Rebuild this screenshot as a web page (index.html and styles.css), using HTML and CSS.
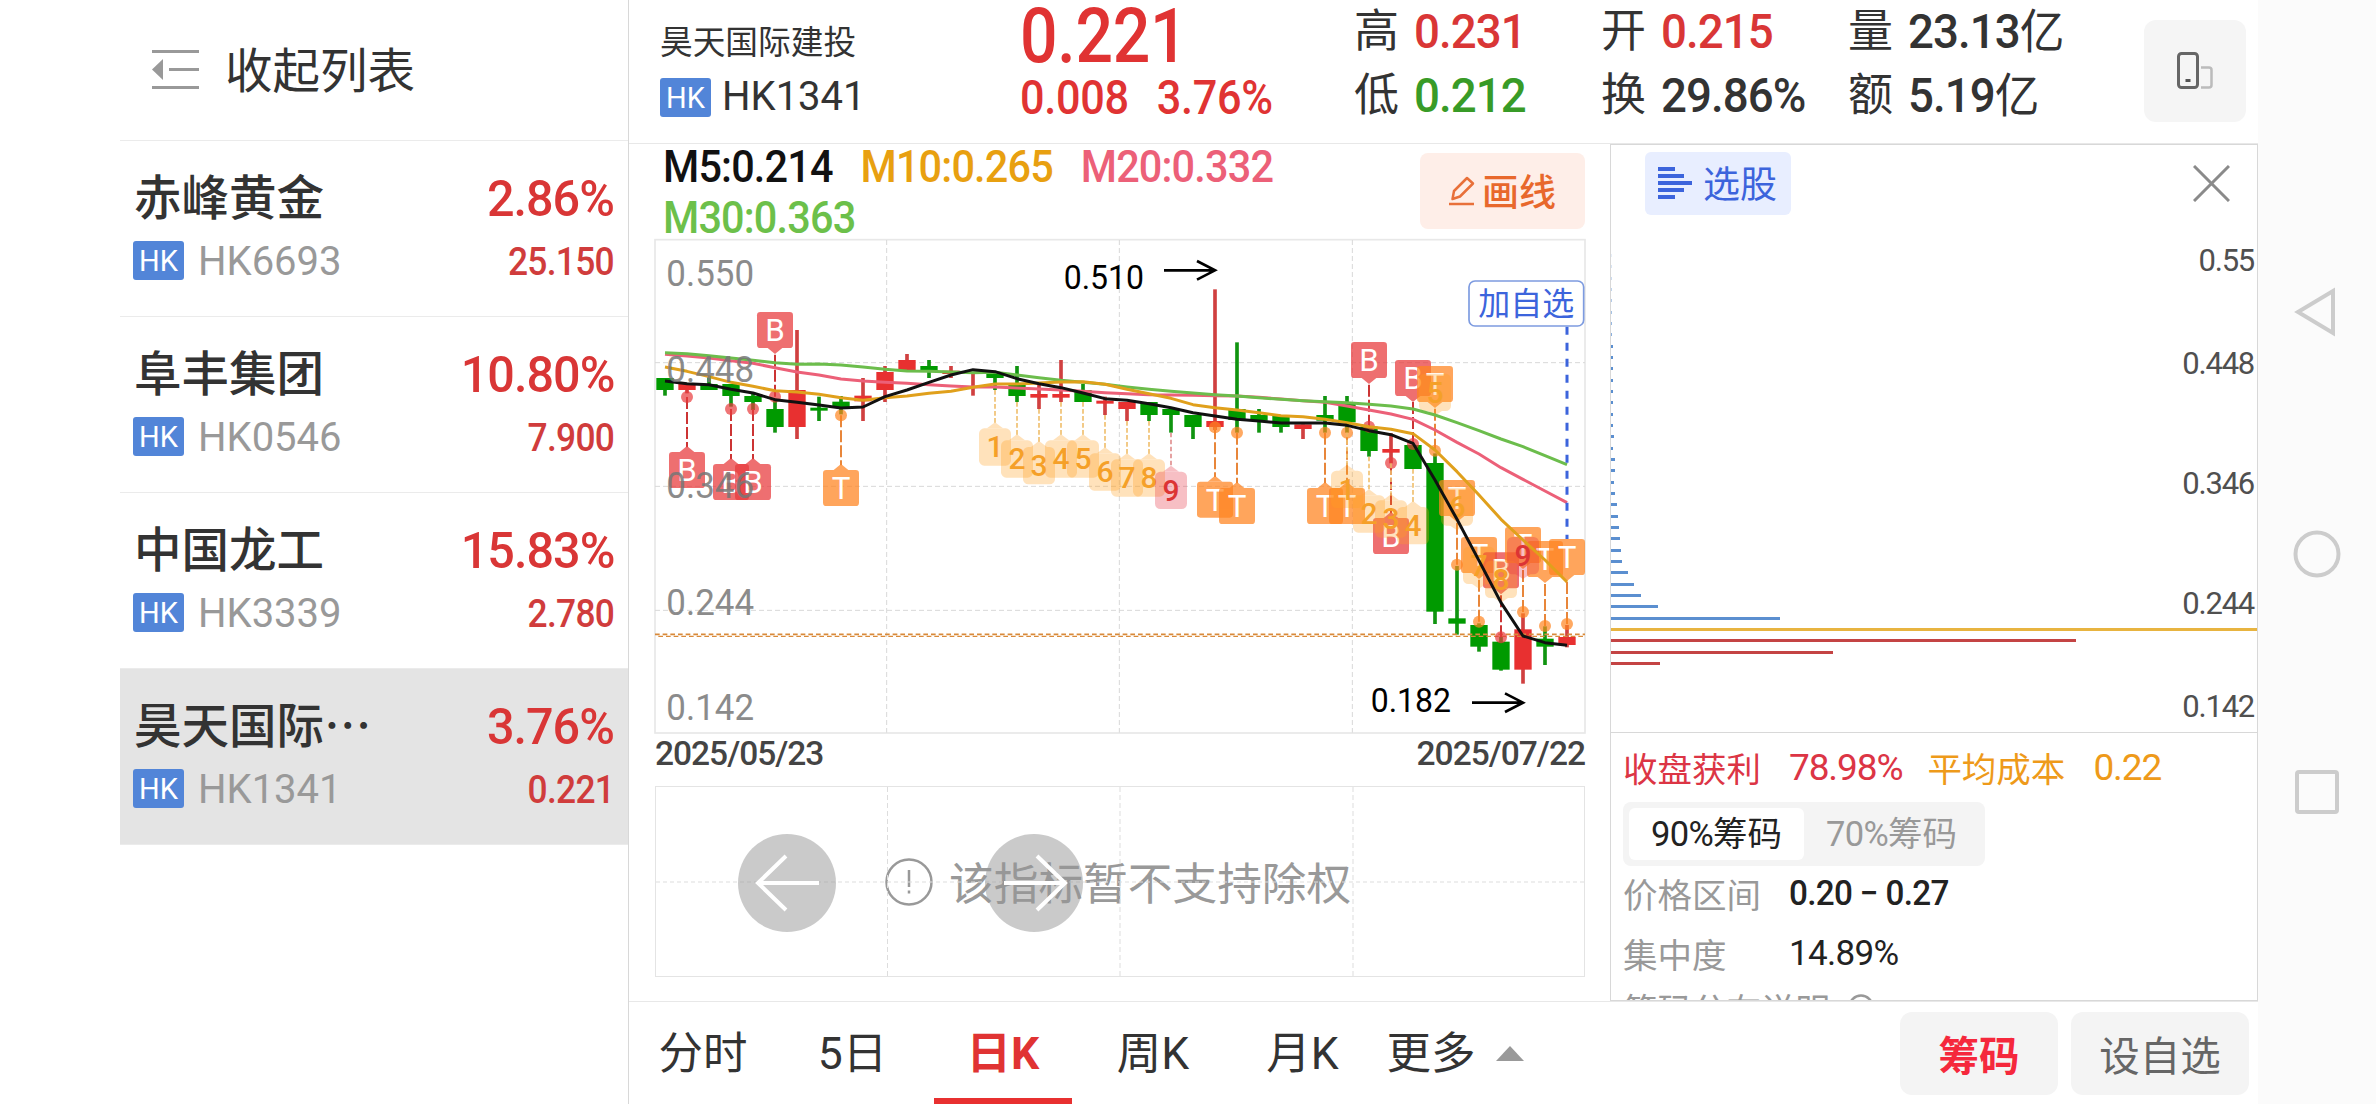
FILE: index.html
```html
<!DOCTYPE html>
<html lang="zh-CN">

<head>
    <meta charset="UTF-8">
    <meta name="viewport" content="width=device-width, initial-scale=1.0">
    <title>昊天国际建投 HK1341</title>
    <link rel="stylesheet" href="styles.css">
</head>

<body>
    <div class="app">
        <div class="sidebar">
            <div class="collapse">
                <svg width="48" height="40" viewBox="0 0 48 40">
                    <path d="M0 1.5h47M17 19.5h30M0 37.5h47" stroke="#999" stroke-width="3" />
                    <path d="M0 19.5L11 9v21z" fill="#999" />
                </svg>
                <span>收起列表</span>
            </div>
            <div class="stock">
                <div class="line">
                    <span class="name">赤峰黄金</span>
                    <span class="rate num">2.86%</span>
                </div>
                <div class="line sub">
                    <i class="tag">HK</i><span class="code">HK6693</span>
                    <span class="price num">25.150</span>
                </div>
            </div>
            <div class="stock">
                <div class="line">
                    <span class="name">阜丰集团</span>
                    <span class="rate num">10.80%</span>
                </div>
                <div class="line sub">
                    <i class="tag">HK</i><span class="code">HK0546</span>
                    <span class="price num">7.900</span>
                </div>
            </div>
            <div class="stock">
                <div class="line">
                    <span class="name">中国龙工</span>
                    <span class="rate num">15.83%</span>
                </div>
                <div class="line sub">
                    <i class="tag">HK</i><span class="code">HK3339</span>
                    <span class="price num">2.780</span>
                </div>
            </div>
            <div class="stock active">
                <div class="line">
                    <span class="name">昊天国际⋯</span>
                    <span class="rate num">3.76%</span>
                </div>
                <div class="line sub">
                    <i class="tag">HK</i><span class="code">HK1341</span>
                    <span class="price num">0.221</span>
                </div>
            </div>
        </div>

        <div class="main">
            <div class="quote">
                <div class="title">
                    <div class="fullname">昊天国际建投</div>
                    <div class="fullcode"><i class="tag">HK</i><span>HK1341</span></div>
                </div>
                <div class="last num">
                    <div class="big">0.221</div>
                    <div class="change"><span>0.008</span><span>3.76%</span></div>
                </div>
                <div class="pair">
                    <div>高<b class="num red">0.231</b></div>
                    <div>低<b class="num green">0.212</b></div>
                </div>
                <div class="pair">
                    <div>开<b class="num red">0.215</b></div>
                    <div>换<b class="num">29.86%</b></div>
                </div>
                <div class="pair">
                    <div>量<b class="num">23.13<em>亿</em></b></div>
                    <div>额<b class="num">5.19<em>亿</em></b></div>
                </div>
                <div class="rotate">
                    <svg width="38" height="38" viewBox="0 0 38 38" fill="none">
                        <rect x="2.5" y="1.5" width="19" height="34" rx="3" stroke="#666" stroke-width="3" />
                        <rect x="9.5" y="27" width="5" height="3" fill="#555" />
                        <path d="M25 15.500h8q2.500 0 2.500 2.500v15q0 2.500-2.500 2.500h-8" stroke="#bbb" stroke-width="2.500" />
                    </svg>
                </div>
            </div>

            <div class="content">
                <div class="kline">
                    <div class="ma">
                        <div class="ma-list num">
                            <span class="m5">M5:0.214</span>
                            <span class="m10">M10:0.265</span>
                            <span class="m20">M20:0.332</span>
                            <span class="m30">M30:0.363</span>
                        </div>
                        <div class="draw">
                            <svg width="27" height="32" viewBox="0 0 27 32" fill="none" stroke="#e8703a" stroke-width="2.500">
                                <path d="M3.500 24l1.500-8L18 3l6 5.500L11 21.500z" stroke-linejoin="round" />
                                <path d="M0 29h25" />
                            </svg>
                            <span>画线</span>
                        </div>
                    </div>
                    <!-- 3 units per pixel -->
                    <svg class="chart" id="chart" viewBox="0 0 2880 1515" width="960" height="505"></svg>
                    <div class="dates num">
                        <span>2025/05/23</span>
                        <span>2025/07/22</span>
                    </div>
                    <div class="indicator">
                        <svg class="grid" width="930" height="191" viewBox="0 0 930 191" fill="none" stroke="#ddd">
                            <path d="M231.500 0v190M464 0v190M697 0v190" stroke-dasharray="5 3" />
                            <path d="M0 95h930" stroke-dasharray="4 3" />
                        </svg>
                        <div class="tip">
                            <svg width="48" height="48" viewBox="0 0 48 48" fill="none" stroke="#999" stroke-width="2.500">
                                <circle cx="24" cy="24" r="22.500" />
                                <path d="M24 12v17M24 32.500v3" />
                            </svg>
                            <span>该指标暂不支持除权</span>
                        </div>
                        <div class="arrow prev">
                            <svg width="98" height="98" viewBox="0 0 98 98" fill="none" stroke="#fff" stroke-width="4">
                                <path d="M81 49H20M48 22L20 49l28 27" />
                            </svg>
                        </div>
                        <div class="arrow next">
                            <svg width="98" height="98" viewBox="0 0 98 98" fill="none" stroke="#fff" stroke-width="4">
                                <path d="M19 49h61M52 22l28 27-28 27" />
                            </svg>
                        </div>
                    </div>
                </div>

                <div class="chips">
                    <div class="chips-head">
                        <div class="pick">
                            <svg width="34" height="34" viewBox="0 0 34 34" stroke="#3c64dc" stroke-width="4">
                                <path d="M0 3h17M0 10h26M0 17h34M0 24h26M0 31h17" />
                            </svg>
                            <span>选股</span>
                        </div>
                        <svg width="37" height="37" viewBox="0 0 37 37" stroke="#8a8a8a" stroke-width="3">
                            <path d="M1 1l35 35M36 1L1 36" />
                        </svg>
                    </div>
                    <div class="dist">
                        <div class="bars" id="bars"></div>
                        <div class="axis num">
                            <span>0.55</span>
                            <span>0.448</span>
                            <span class="mid">0.346</span>
                            <span class="mid">0.244</span>
                            <span>0.142</span>
                        </div>
                    </div>
                    <div class="stats">
                        <div class="summary">
                            <span class="profit">收盘获利</span><span class="profit num">78.98%</span>
                            <span class="cost">平均成本</span><span class="cost num">0.22</span>
                        </div>
                        <div class="seg">
                            <span class="on"><u class="num">90%</u>筹码</span>
                            <span><u class="num">70%</u>筹码</span>
                        </div>
                        <div class="item"><label>价格区间</label><span class="num strong">0.20 − 0.27</span></div>
                        <div class="item second"><label>集中度</label><span class="num">14.89%</span></div>
                        <div class="item help">
                            <label>筹码分布说明</label>
                            <svg width="26" height="26" viewBox="0 0 26 26" fill="none" stroke="#999" stroke-width="2.500">
                                <circle cx="13" cy="13" r="11.500" />
                            </svg>
                        </div>
                    </div>
                </div>
            </div>

            <div class="tabs">
                <span class="t1">分时</span>
                <span class="t2">5日</span>
                <span class="t3 on">日K</span>
                <span class="t4">周K</span>
                <span class="t5">月K</span>
                <span class="t6">更多<svg width="28" height="15" viewBox="0 0 28 15"><path d="M14 0l14 15H0z" fill="#999" /></svg></span>
                <button class="btn hot">筹码</button>
                <button class="btn wide">设自选</button>
            </div>
        </div>

        <div class="sysbar">
            <svg width="46" height="50" viewBox="0 0 46 50"><path d="M4 25L39 4v42z" /></svg>
            <svg width="48" height="48" viewBox="0 0 48 48"><circle cx="24" cy="24" r="21.500" /></svg>
            <svg width="44" height="44" viewBox="0 0 44 44"><rect x="2" y="2" width="40" height="40" rx="2" /></svg>
        </div>
    </div>
    <script src="chart.js"></script>
</body>

</html>
```
FILE: styles.css
```css
body {
    margin: 0;
    background: #fff;
    color: #333;
    font-family: Roboto, "Noto Sans CJK SC", sans-serif;
}
i, em {
    font-style: normal;
}
u {
    text-decoration: none;
}
.num {
    font-family: Roboto, "Noto Sans CJK SC", sans-serif;
    letter-spacing: -0.02em;
}
.red {
    color: #d93636;
}
.green {
    color: #389b27;
}
.app {
    display: flex;
    width: 2376px;
    height: 1104px;
    overflow: hidden;
}

/* stock list */
.sidebar {
    width: 508px;
    margin-left: 120px;
    border-right: 1px solid #d8d8d8;
}
.collapse {
    display: flex;
    align-items: center;
    height: 140px;
    padding-left: 32px;
    border-bottom: 1px solid #ebebeb;
    font-size: 47.500px;
}
.collapse span {
    margin: 0 0 6px 25px;
}
.stock {
    height: 175px;
    padding: 0 14px;
    border-bottom: 1px solid #ebebeb;
}
.stock.active {
    background: #e4e4e4;
}
.line {
    display: flex;
    align-items: center;
    justify-content: space-between;
    height: 62px;
    padding-top: 25px;
}
.line.sub {
    height: 62px;
    padding-top: 1px;
}
.name {
    margin-bottom: 5px;
    font-size: 47.500px;
    font-weight: 500;
}
.rate {
    margin-top: 4px;
    color: #d93636;
    font-size: 50px;
    font-weight: 500;
    transform: scaleX(0.97);
    transform-origin: right;
}
.tag {
    width: 51px;
    height: 39px;
    margin-left: -1px;
    border-radius: 3px;
    background: #5285d8;
    color: #fff;
    font-size: 29px;
    line-height: 40px;
    text-align: center;
}
.code {
    flex: 1;
    margin: 3px 0 0 14px;
    color: #999;
    font-size: 40px;
}
.price {
    margin-top: 4px;
    color: #d03c3c;
    font-size: 38px;
    font-weight: 500;
    transform: scaleX(0.93);
    transform-origin: right;
}

/* quote header */
.main {
    display: flex;
    flex-direction: column;
    width: 1629px;
}
.quote {
    display: grid;
    grid-template-columns: 360px 334px 247px 247px 250px 1fr;
    height: 143px;
    padding: 0 12px 0 31px;
    border-bottom: 1px solid #e8e8e8;
}
.title {
    padding-top: 16px;
    line-height: 54px;
}
.fullname {
    font-size: 32.700px;
}
.fullcode {
    display: flex;
    align-items: center;
    font-size: 40px;
}
.fullcode .tag {
    margin: 0 11px 0 0;
}
.last {
    color: #e03333;
    font-weight: 500;
}
.big {
    padding-top: 2px;
    font-size: 76px;
    line-height: 69px;
    transform: scaleX(0.87);
    transform-origin: left;
}
.change {
    font-size: 48px;
    line-height: 54px;
    transform: scaleX(0.9);
    transform-origin: left;
}
.change span {
    margin-right: 31px;
}
.pair {
    font-size: 45px;
    line-height: 64px;
}
.pair div {
    display: flex;
    align-items: center;
    height: 64px;
}
.pair b {
    margin-left: 15px;
    font-size: 48px;
    font-weight: 500;
    transform: scaleX(0.95);
    transform-origin: left;
}
.pair em {
    font-size: 47px;
    font-weight: 400;
}
.rotate {
    display: flex;
    align-items: center;
    justify-content: center;
    justify-self: end;
    width: 102px;
    height: 102px;
    margin-top: 20px;
    border-radius: 12px;
    background: #f5f5f5;
}

/* k line */
.content {
    display: flex;
    height: 857px;
}
.kline {
    width: 981px;
}
.ma {
    display: flex;
    justify-content: space-between;
    height: 86px;
    padding: 0 25px 0 34px;
}
.ma-list {
    width: 730px;
    margin-top: -3px;
    font-size: 45px;
    font-weight: 500;
    line-height: 51px;
    transform: scaleX(0.92);
    transform-origin: left;
}
.ma-list span {
    margin-right: 20px;
}
.m5 {
    color: #111;
}
.m10 {
    color: #e8a010;
}
.m20 {
    color: #ec6078;
}
.m30 {
    color: #6cc04a;
}
.draw {
    display: flex;
    align-items: center;
    justify-content: center;
    width: 165px;
    height: 76px;
    margin-top: 9px;
    border-radius: 8px;
    background: #feeee8;
    color: #e8682c;
    font-size: 37px;
    font-weight: 500;
}
.draw span {
    margin: 0 0 3px 6px;
}
.chart {
    display: block;
    margin-left: 11px;
}
.chart text {
    font-family: Roboto, "Noto Sans CJK SC", sans-serif;
}
.dates {
    display: flex;
    justify-content: space-between;
    height: 51px;
    padding: 0 25px 0 26px;
    color: #444;
    font-size: 33.500px;
    font-weight: 500;
    letter-spacing: -0.03em;
    line-height: 37px;
}
.indicator {
    position: relative;
    width: 928px;
    height: 189px;
    margin-left: 26px;
    border: 1px solid #e4e4e4;
}
.indicator .grid {
    position: absolute;
    top: 0;
    left: 0;
}
.tip {
    display: flex;
    align-items: center;
    height: 190px;
    padding-left: 229px;
    color: #999;
    font-size: 44.700px;
}
.tip span {
    margin: 0 0 3px 16px;
}
.arrow {
    position: absolute;
    top: 47px;
    width: 98px;
    height: 98px;
    border-radius: 50%;
    background: rgba(150, 150, 150, 0.5);
}
.prev {
    left: 82px;
}
.next {
    left: 329px;
}

/* chip distribution */
.chips {
    width: 646px;
    border: 1px solid #d8d8d8;
    overflow: hidden;
}
.chips-head {
    display: flex;
    align-items: center;
    justify-content: space-between;
    height: 76px;
    padding: 0 27px 0 34px;
}
.pick {
    display: flex;
    align-items: center;
    width: 133px;
    height: 63px;
    padding-left: 13px;
    border-radius: 6px;
    background: #e8eeff;
    color: #3c64dc;
    font-size: 37px;
}
.pick span {
    margin: 0 0 2px 11px;
}
.dist {
    display: flex;
    justify-content: space-between;
    height: 511px;
    border-bottom: 1px solid #d8d8d8;
}
.bars {
    width: 646px;
    padding-top: 29px;
    margin-right: -80px;
}
.bars div {
    display: flex;
    align-items: center;
    height: 11.330px;
}
.bars i {
    height: 3px;
    background: #5b8fd0;
}
.bars .avg {
    background: #e8b440;
}
.bars .win {
    background: #c44444;
}
.axis {
    display: flex;
    flex-direction: column;
    gap: 67px;
    width: 90px;
    padding: 22px 3px 0 0;
    color: #505050;
    font-size: 31px;
    letter-spacing: -0.04em;
    line-height: 36px;
    text-align: right;
}
.axis .mid {
    margin-top: 17px;
}
.summary {
    display: flex;
    align-items: center;
    height: 66px;
    padding: 1px 0 2px 12px;
    font-size: 34.500px;
}
.summary .num {
    margin: 0 25px 0 28px;
    font-size: 37px;
    letter-spacing: -0.03em;
}
.profit {
    color: #dc3545;
}
.cost {
    color: #ee9a1a;
}
.seg {
    display: flex;
    width: 350px;
    height: 52px;
    margin-left: 12px;
    padding: 6px;
    border-radius: 8px;
    background: #f4f4f4;
    color: #999;
    font-size: 34.500px;
    line-height: 52px;
}
.seg span {
    width: 175px;
    border-radius: 6px;
    text-align: center;
}
.seg .on {
    background: #fff;
    color: #222;
}
.item {
    display: flex;
    align-items: center;
    height: 54px;
    padding-left: 12px;
    color: #222;
    font-size: 35px;
}
.item label {
    width: 166px;
    color: #999;
    font-size: 34.500px;
}
.item .strong {
    font-weight: 500;
    transform: scaleX(0.95);
    transform-origin: left;
}
.item.second {
    height: 66px;
}
.item.help {
    align-items: flex-start;
    margin-top: 8px;
}
.item.help label {
    width: 225px;
    line-height: 34px;
}

/* bottom tabs */
.tabs {
    display: flex;
    align-items: center;
    height: 102px;
    border-top: 1px solid #e8e8e8;
    font-size: 44.500px;
}
.tabs span {
    height: 102px;
    padding-top: 2px;
    line-height: 101px;
    box-sizing: border-box;
    text-align: center;
}
.t1 {
    width: 148px;
}
.t2 {
    width: 151px;
}
.t3 {
    width: 138px;
    margin-left: 6px;
}
.tabs .on {
    border-bottom: 6px solid #e83030;
    color: #e03333;
    font-weight: 700;
}
.t4 {
    width: 162px;
}
.t5 {
    width: 137px;
}
.t6 {
    width: 168px;
}
.t6 svg {
    margin-left: 20px;
    vertical-align: 8px;
}
.btn {
    width: 158px;
    height: 83px;
    padding: 0;
    border: 0;
    border-radius: 12px;
    background: #f4f4f4;
    color: #666;
    font-family: "Noto Sans CJK SC", sans-serif;
    font-size: 40.500px;
}
.hot {
    margin: 0 13px 0 auto;
    color: #f5283c;
    font-weight: 700;
}
.wide {
    width: 178px;
    margin-right: 9px;
}

/* android navigation */
.sysbar {
    display: flex;
    flex-direction: column;
    align-items: center;
    justify-content: space-between;
    flex: 1;
    height: 527px;
    padding: 287px 0 290px;
    background: #fbfbfb;
}
.sysbar svg {
    fill: none;
    stroke: #ccc;
    stroke-width: 4;
}
```
FILE: chart.js
```js
const GREEN = '#009a00'
const RED = '#e83030'

// [up, high, bodyTop, bodyBottom, low]
const candles = [
    [0, 444, 444, 480, 497], [1, 460, 460, 480, 490], [0, 440, 462, 480, 480], [0, 462, 462, 498, 530],
    [0, 490, 498, 516, 540], [0, 505, 537, 591, 608], [1, 300, 480, 591, 627], [0, 500, 533, 542, 573],
    [0, 498, 515, 533, 553], [1, 444, 497, 514, 573], [1, 408, 426, 480, 516], [1, 372, 390, 420, 420],
    [0, 390, 408, 424, 444], [1, 408, 422, 432, 444], [1, 426, 426, 432, 497], [0, 425, 430, 444, 480],
    [0, 408, 462, 498, 516], [1, 465, 492, 503, 537], [1, 390, 492, 503, 516], [0, 462, 480, 516, 516],
    [1, 500, 512, 521, 555], [1, 516, 516, 537, 573], [0, 516, 516, 555, 573], [0, 537, 537, 555, 608],
    [0, 555, 555, 591, 627], [1, 178, 573, 591, 600], [0, 337, 537, 570, 608], [0, 537, 555, 572, 608],
    [0, 557, 557, 591, 608], [1, 583, 583, 597, 627], [0, 498, 555, 572, 608], [0, 498, 522, 577, 608],
    [0, 590, 590, 663, 680], [1, 610, 657, 668, 700], [0, 645, 645, 717, 717], [0, 670, 699, 1145, 1182],
    [0, 1008, 1165, 1181, 1214], [0, 1180, 1185, 1250, 1265], [0, 1220, 1235, 1319, 1322], [1, 1150, 1198, 1319, 1361],
    [0, 1189, 1226, 1250, 1305], [1, 1185, 1221, 1245, 1252]
]

const ma = {
    '#ec6078': [373, 378, 384, 392, 400, 413, 426, 435, 447, 453, 457, 460, 464, 468, 471, 471, 474, 477, 480, 484, 488, 491, 494, 495, 496, 497, 498, 502, 507, 512, 517, 528, 540, 552, 568, 600, 637, 672, 713, 748, 783, 818],
    '#6cbd4c': [368, 371, 377, 384, 391, 398, 403, 402, 405, 411, 418, 423, 424, 426, 428, 427, 435, 443, 451, 457, 463, 471, 478, 484, 489, 494, 498, 503, 508, 512, 515, 518, 523, 528, 537, 555, 578, 602, 627, 650, 677, 704],
    '#e0a01c': [411, 424, 440, 457, 469, 482, 486, 493, 503, 511, 503, 498, 490, 484, 472, 462, 462, 459, 456, 455, 463, 478, 491, 505, 524, 533, 540, 548, 557, 560, 568, 578, 590, 598, 611, 660, 725, 795, 868, 930, 990, 1056],
    '#111': [453, 461, 464, 478, 489, 509, 517, 525, 534, 531, 500, 480, 457, 435, 419, 425, 446, 461, 473, 489, 506, 511, 521, 533, 548, 558, 568, 573, 579, 579, 579, 586, 602, 614, 640, 750, 868, 992, 1118, 1218, 1238, 1246]
}

// [index, letter, boxTop, dotY]
const signals = [
    [1, 'B', 666, 501], [3, 'B', 702, 537], [4, 'B', 702, 537], [5, 'B', 246, 500], [8, 'T', 720, 556],
    [25, 'T', 755, 592], [26, 'T', 774, 608], [30, 'T', 774, 608], [31, 'T', 774, 608],
    [32, 'B', 336, 590], [33, 'B', 864, 699], [34, 'B', 390, 642], [35, 'T', 408, 662],
    [36, 'T', 750, 1004], [37, 'T', 921, 1175], [38, 'B', 967, 1222], [39, 'T', 891, 1146],
    [40, 'T', 933, 1188], [41, 'T', 927, 1182]
]

// [index, count, boxTop, above]
const counts = [
    [15, 1, 595], [16, 2, 631], [17, 3, 651], [18, 4, 631], [19, 5, 631], [20, 6, 670], [21, 7, 688], [22, 8, 688], [23, 9, 725],
    [31, 1, 722], [32, 2, 796], [33, 3, 811], [34, 4, 831], [35, 5, 431, 1], [36, 6, 775, 1], [37, 7, 950, 1], [38, 8, 992, 1], [39, 9, 921, 1]
]

const px = i => 75 + 66 * i

function line(x1, y1, x2, y2, color, width, dash) {
    return `<line x1="${x1}" y1="${y1}" x2="${x2}" y2="${y2}" stroke="${color}" stroke-width="${width}" ${dash ? `stroke-dasharray="${dash}"` : ''}/>`
}
function label(x, y, size, color, text, length) {
    return `<text x="${x}" y="${y}" font-size="${size}" fill="${color}" ${length ? `textLength="${length}" lengthAdjust="spacingAndGlyphs"` : ''}>${text}</text>`
}

let svg = ''

// grid
svg += '<rect x="45" y="29" width="2790" height="1480" fill="none" stroke="#e8e8e8" stroke-width="5"/>'
for (const x of [740, 1438, 2137]) svg += line(x, 30, x, 1508, '#d8d8d8', 3, '15 9')
for (const y of [398, 769, 1141]) svg += line(45, y, 2835, y, '#d8d8d8', 3, '15 9')

candles.forEach(([up, high, top, bottom, low], i) => {
    const color = up ? RED : GREEN
    svg += line(px(i), high, px(i), low, up ? '#d04040' : '#109410', 11)
    svg += `<rect x="${px(i) - 26}" y="${top}" width="52" height="${bottom - top}" fill="${color}"/>`
})

// last price, two dashed strokes half a step apart
svg += line(45, 1213, 2835, 1213, '#d98a3a', 5, '14 9')
svg += line(55, 1219, 2835, 1219, '#d98a3a', 4, '14 9')

// signals, behind the average lines
signals.forEach(([i, letter, top, dot]) => {
    const x = px(i)
    const b = letter === 'B'
    const below = top > dot
    const fill = b ? '#e83a3c' : '#ff8420'
    const stroke = b ? '#cc3434' : '#e8863a'
    svg += line(x, dot, x, below ? top - 14 : top + 122, stroke, 6, '36 9')
    svg += `<circle cx="${x}" cy="${dot}" r="18" fill="${fill}" opacity=".7"/>`
    const tip = below
        ? `M${x - 22} ${top}L${x} ${top - 18}L${x + 22} ${top}z`
        : `M${x - 22} ${top + 108}L${x} ${top + 126}L${x + 22} ${top + 108}z`
    svg += `<g fill="${fill}" opacity=".73"><rect x="${x - 54}" y="${top}" width="108" height="108" rx="10"/><path d="${tip}"/></g>`
    svg += `<text x="${x}" y="${top + 87}" font-size="94" fill="#fff" text-anchor="middle">${letter}</text>`
})

counts.forEach(([i, n, top, above]) => {
    const x = px(i)
    const nine = n === 9
    if (!above) svg += line(x, candles[i][4], x, top - 14, nine ? '#e09090' : '#f0c070', 5, '14 7')
    const tip = above
        ? `M${x - 24} ${top + 110}L${x} ${top + 126}L${x + 24} ${top + 110}z`
        : `M${x - 24} ${top}L${x} ${top - 18}L${x + 24} ${top}z`
    svg += `<g fill="${nine ? '#e83040' : '#ffa020'}" opacity=".3"><rect x="${x - 48}" y="${top}" width="96" height="112" rx="16"/><path d="${tip}"/></g>`
    svg += `<text x="${x}" y="${top + 87}" font-size="90" font-weight="500" fill="${nine ? '#dc3434' : '#f5a028'}" text-anchor="middle">${n}</text>`
})

for (const color in ma) {
    const points = ma[color].map((y, i) => `${px(i)},${y}`).join(' ')
    svg += `<polyline points="${points}" fill="none" stroke="${color}" stroke-width="9" stroke-linejoin="round"/>`
}

// price scale
const scale = [['0.550', 167], ['0.448', 455], ['0.346', 804], ['0.244', 1154], ['0.142', 1470]]
for (const [text, y] of scale) svg += `<g opacity=".85">${label(79, y, 108, '#777', text, 263)}</g>`

// high / low
svg += label(1271, 178, 98, '#000', '0.510', 241)
svg += '<path d="M1572 121h150M1671 93l54 28-54 28" fill="none" stroke="#000" stroke-width="8"/>'
svg += label(2192, 1445, 98, '#000', '0.182', 241)
svg += '<path d="M2496 1418h150M2595 1390l54 28-54 28" fill="none" stroke="#000" stroke-width="8"/>'

// watch mark
svg += line(2781, 290, 2781, 927, '#3c64dc', 9, '24 24')
svg += '<rect x="2487" y="153" width="344" height="135" rx="18" fill="#fff" stroke="#7d9be0" stroke-width="5"/>'
svg += label(2515, 256, 96, '#3c64dc', '加自选')

document.querySelector('#chart').innerHTML = svg

// chip bars, top price first
const chips = [1, 1, 1, 1, 1, 1, 1, 1, 1.5, 1.5, 1.5, 1.5, 2, 2, 2, 2, 2.500, 2, 4, 4, 3, 4, 5.500, 6.500, 8, 9, 10, 11, 17, 23, 30, 47, 169, 646, 465, 222, 49]
document.querySelector('#bars').innerHTML = chips.map((w, i) => {
    const type = i === 33 ? 'avg' : i > 33 ? 'win' : ''
    const fade = i < 8 ? `;opacity:${0.15 + i * 0.08}` : ''
    return `<div><i class="${type}" style="width:${w}px${fade}"></i></div>`
}).join('')
```
